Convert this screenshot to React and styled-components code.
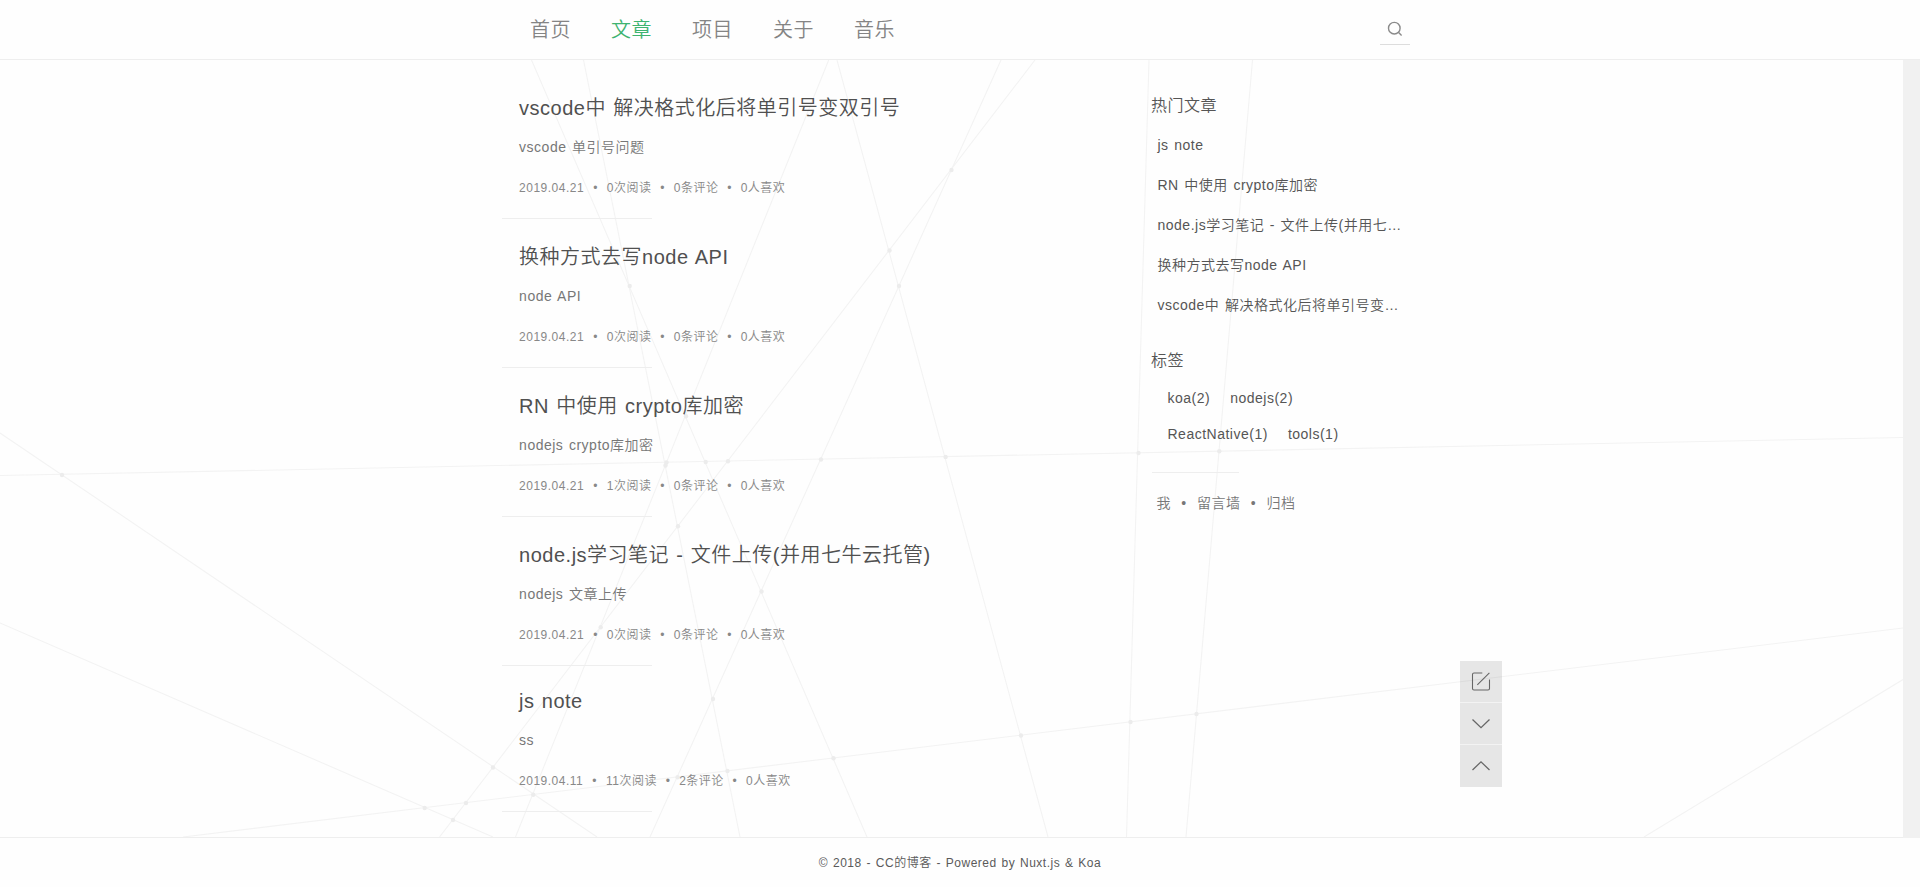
import React from 'react';
import styled, { createGlobalStyle } from 'styled-components';

const GlobalStyle = createGlobalStyle`
  * { box-sizing: border-box; margin: 0; padding: 0; }
  body {
    background: #fefefe;
    color: #555;
    font-family: "Liberation Sans", "Noto Sans CJK SC", sans-serif;
    font-size: 14px;
    font-weight: 350;
    letter-spacing: 0.5px;
    word-spacing: 1.2px;
    overflow: hidden;
  }
  ul { list-style: none; }
  a { color: inherit; text-decoration: none; }
`;

const Page = styled.div`
  display: flex;
  flex-direction: column;
  height: 887px;
`;

const Header = styled.header`
  height: 60px;
  border-bottom: 1px solid #eee;
`;

const HeaderInner = styled.div`
  width: 900px;
  height: 59px;
  margin: 0 auto;
  display: flex;
  justify-content: space-between;
`;

const Nav = styled.nav`
  display: flex;
`;

const NavLink = styled.a`
  padding: 0 20px;
  font-size: 20px;
  line-height: 61px;
  color: ${(p) => (p.$active ? '#3eb370' : '#848484')};
`;

const SearchBox = styled.button`
  display: flex;
  align-items: center;
  justify-content: center;
  width: 30px;
  height: 31px;
  margin-top: 14px;
  border: 0;
  border-bottom: 1px solid #ddd;
  background: none;
`;

const Body = styled.main`
  position: relative;
  display: flex;
  height: 777px;
`;

const Backdrop = styled.svg`
  position: absolute;
  left: 0;
  top: 0;
  z-index: -1;
`;

const Scroll = styled.div`
  flex: 1;
`;

const ScrollTrack = styled.div`
  width: 17px;
  height: 778px;
  background: #f1f1f1;
`;

const Container = styled.div`
  display: flex;
  justify-content: space-between;
  width: 900px;
  margin: 0 auto;
  padding-top: 10px;
`;

const Article = styled.article`
  padding-top: ${(p) => (p.$latin ? 19 : 22)}px;
`;

const Title = styled.h2`
  padding-left: 17.6px;
  font-size: 20px;
  font-weight: inherit;
  line-height: 32px;
  color: #505050;
`;

const Summary = styled.p`
  padding: 8px 17.6px 0;
  line-height: 30px;
  color: #777;
`;

const Meta = styled.p`
  display: flex;
  padding: 11px 17.6px 15px;
  font-size: 12px;
  line-height: 30px;
  color: #888;
`;

const Dot = styled.span`
  width: ${(p) => p.$width || 22.7}px;
  text-align: center;
`;

const Rule = styled.div`
  width: ${(p) => p.$width}px;
  height: 1px;
  background: #eee;
`;

const Sidebar = styled.aside`
  width: 250px;
  padding-top: 20px;
`;

const SideTitle = styled.h3`
  margin-left: -0.6px;
  font-size: 16px;
  font-weight: inherit;
  line-height: 32px;
  color: #555;
`;

const HotItem = styled.li`
  height: 40px;
  padding-left: 6px;
  line-height: 40px;
  white-space: nowrap;
  overflow: hidden;
  text-overflow: ellipsis;
`;

const HotList = styled.ul`
  padding: 3px 0 20px;
  width: 252px;
`;

const TagList = styled.div`
  display: flex;
  flex-wrap: wrap;
  column-gap: 20px;
  padding: 3px 16px 20px;
`;

const Tag = styled.a`
  line-height: 36px;
`;

const SideLinks = styled.div`
  display: flex;
  padding: 15px 5px;
  line-height: 30px;
  color: #777;
`;

const Tools = styled.div`
  position: fixed;
  left: 1460px;
  top: 661px;
  width: 42px;
`;

const ToolButton = styled.button`
  display: flex;
  align-items: center;
  justify-content: center;
  width: 42px;
  height: 42px;
  border: 0;
  padding-bottom: ${(p) => (p.$last ? 1 : 0)}px;
  border-bottom: ${(p) => (p.$last ? '0' : '1px solid #f3f3f3')};
  background: rgba(0, 0, 0, 0.094);
  background-clip: padding-box;
`;

const Icon = styled.svg`
  display: block;
  fill: none;
  stroke: ${(p) => p.$color || '#666'};
  stroke-width: ${(p) => p.$weight || 1.1};
`;

const Footer = styled.footer`
  height: 50px;
  border-top: 1px solid #eee;
  font-size: 12px;
  word-spacing: 1px;
  line-height: 50px;
  text-align: center;
  color: #5a5a5a;
`;

const navItems = ['首页', '文章', '项目', '关于', '音乐'];

const articles = [
  { title: 'vscode中 解决格式化后将单引号变双引号', summary: 'vscode 单引号问题', date: '2019.04.21', reads: 0, comments: 0 },
  { title: '换种方式去写node API', summary: 'node API', date: '2019.04.21', reads: 0, comments: 0 },
  { title: 'RN 中使用 crypto库加密', summary: 'nodejs crypto库加密', date: '2019.04.21', reads: 1, comments: 0 },
  { title: 'node.js学习笔记 - 文件上传(并用七牛云托管)', summary: 'nodejs 文章上传', date: '2019.04.21', reads: 0, comments: 0 },
  { title: 'js note', summary: 'ss', date: '2019.04.11', reads: 11, comments: 2, latin: true },
];

const hot = [
  'js note',
  'RN 中使用 crypto库加密',
  'node.js学习笔记 - 文件上传(并用七牛云托管)',
  '换种方式去写node API',
  'vscode中 解决格式化后将单引号变双引号',
];

const tags = ['koa(2)', 'nodejs(2)', 'ReactNative(1)', 'tools(1)'];

const lines = [
  [531.5, 0, 867, 777],
  [583.5, 0, 740, 777],
  [828.7, 0, 515.5, 777],
  [837, 0, 1048, 777],
  [1035, 0, 439.5, 777],
  [1001, 0, 650, 777],
  [1149, 0, 1126.5, 777],
  [1252.5, 0, 1186, 777],
  [0, 415.5, 1903, 377.5],
  [0, 373, 597, 777],
  [0, 563, 493, 777],
  [183, 777, 1903, 568],
  [1644, 777, 1903, 619.5],
];

const nodes = [
  [62, 415], [629.7, 226], [686, 356.3], [705.7, 402], [666.5, 402.5], [665.5, 405.5],
  [728, 401.3], [821, 399.5], [945.6, 397], [1138.5, 393], [1219.3, 391.3],
  [951.5, 110], [889.5, 190.5], [899, 226], [678, 466.3], [761.5, 531.5],
  [600.7, 567.3], [713, 639], [493, 707.5], [533.2, 734.7], [466, 743], [453, 760],
  [424.7, 748], [677.6, 717.3], [727.5, 711], [833.5, 698.3], [1021, 675.5],
  [1130.5, 662], [1196.5, 654],
];

function Web() {
  return (
    <Backdrop width="1903" height="777">
      <g stroke="#f3f3f3" strokeWidth="1.1">
        {lines.map(([x1, y1, x2, y2], i) => (
          <line key={i} x1={x1} y1={y1} x2={x2} y2={y2} />
        ))}
      </g>
      <g fill="#ececec">
        {nodes.map(([x, y], i) => (
          <circle key={i} cx={x} cy={y} r="2.2" />
        ))}
      </g>
    </Backdrop>
  );
}

export default function App() {
  return (
    <Page>
      <GlobalStyle />
      <Header>
        <HeaderInner>
          <Nav>
            {navItems.map((n) => (
              <NavLink key={n} href="#" $active={n === '文章'}>{n}</NavLink>
            ))}
          </Nav>
          <SearchBox aria-label="search">
            <Icon width="16" height="16" viewBox="0 0 16 16" $color="#8a8a8a" $weight={1.4}>
              <circle cx="7.3" cy="7.2" r="5.8" />
              <path d="M11.4 11.3 L14.6 14.4" />
            </Icon>
          </SearchBox>
        </HeaderInner>
      </Header>
      <Body>
        <Web />
        <Scroll>
          <Container>
            <section>
              {articles.map((a) => (
                <Article key={a.title} $latin={a.latin}>
                  <Title><a href="#">{a.title}</a></Title>
                  <Summary>{a.summary}</Summary>
                  <Meta>
                    <span>{a.date}</span>
                    <Dot>•</Dot>
                    <span>{a.reads}次阅读</span>
                    <Dot $width={22.2}>•</Dot>
                    <span>{a.comments}条评论</span>
                    <Dot $width={22.2}>•</Dot>
                    <span>0人喜欢</span>
                  </Meta>
                  <Rule $width={150} />
                </Article>
              ))}
            </section>
            <Sidebar>
              <SideTitle>热门文章</SideTitle>
              <HotList>
                {hot.map((h) => (
                  <HotItem key={h}><a href="#">{h}</a></HotItem>
                ))}
              </HotList>
              <SideTitle>标签</SideTitle>
              <TagList>
                {tags.map((t) => (
                  <Tag key={t} href="#">{t}</Tag>
                ))}
              </TagList>
              <Rule $width={87} />
              <SideLinks>
                <a href="#">我</a>
                <Dot $width={26}>•</Dot>
                <a href="#">留言墙</a>
                <Dot $width={26}>•</Dot>
                <a href="#">归档</a>
              </SideLinks>
            </Sidebar>
          </Container>
        </Scroll>
        <ScrollTrack />
      </Body>
      <Footer>© 2018 - CC的博客 - Powered by Nuxt.js &amp; Koa</Footer>
      <Tools>
        <ToolButton aria-label="write">
          <Icon width="20" height="20" viewBox="0 0 20 20">
            <path d="M11.3 1 H3 Q1.5 1 1.5 2.5 V16.5 Q1.5 18 3 18 H17 Q18.5 18 18.5 16.5 V7.5" />
            <path d="M6.3 12.9 L18.4 0.9" />
          </Icon>
        </ToolButton>
        <ToolButton aria-label="down">
          <Icon width="20" height="20" viewBox="0 0 20 20" $weight={1.3}>
            <path d="M1.5 5.5 L10 13.7 L18.5 5.5" />
          </Icon>
        </ToolButton>
        <ToolButton aria-label="up" $last>
          <Icon width="20" height="20" viewBox="0 0 20 20" $weight={1.3}>
            <path d="M1.5 14 L10 5.8 L18.5 14" />
          </Icon>
        </ToolButton>
      </Tools>
    </Page>
  );
}
